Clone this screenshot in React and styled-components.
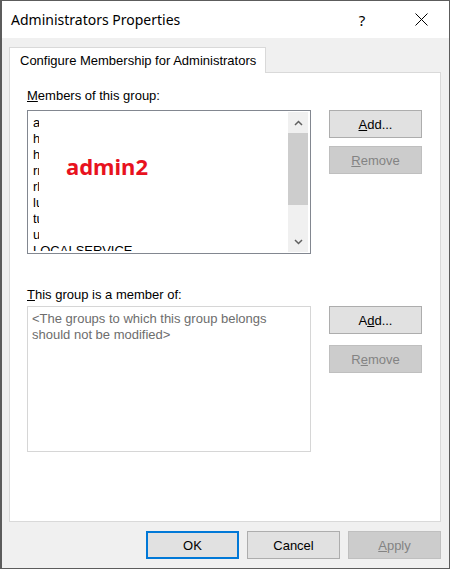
import React from 'react';
import styled, { createGlobalStyle, css } from 'styled-components';

const GlobalStyle = createGlobalStyle`
  html, body {
    margin: 0;
    padding: 0;
    background: #ffffff;
  }
  * {
    box-sizing: border-box;
  }
`;

const uiFont = css`
  font-family: 'Liberation Sans', Arial, sans-serif;
  font-size: 13px;
`;

const Window = styled.div`
  width: 450px;
  height: 569px;
  border: 1px solid #5c5c5c;
  border-left-width: 2px;
  background: #f0f0f0;
  display: flex;
  flex-direction: column;
  ${uiFont}
`;

const TitleBar = styled.div`
  height: 37px;
  background: #ffffff;
  display: flex;
  align-items: center;
  padding-left: 9px;
`;

const Title = styled.div`
  font-family: 'Noto Sans', 'Open Sans', sans-serif;
  font-size: 14px;
  color: #000;
  flex: 1;
`;

const TitleButton = styled.div`
  width: 20px;
  height: 37px;
  display: flex;
  align-items: center;
  justify-content: center;
  font-family: 'Noto Sans', sans-serif;
  font-size: 15px;
  color: #000;
  margin-right: ${(p) => p.$mr || 0}px;
`;

const Body = styled.div`
  flex: 1;
  display: flex;
  flex-direction: column;
  padding: 9px 8px 0 7px;
`;

const TabStrip = styled.div`
  display: flex;
  height: 25px;
`;

const Tab = styled.div`
  height: 26px;
  padding: 0 9px 0 10px;
  background: #ffffff;
  border: 1px solid #d9d9d9;
  border-bottom: none;
  display: flex;
  align-items: center;
  position: relative;
  z-index: 1;
  color: #000;
`;

const Panel = styled.div`
  height: 450px;
  border: 1px solid #d9d9d9;
  background: #ffffff;
  padding: 15px 17px 0 17px;
  display: flex;
  flex-direction: column;
`;

const Label = styled.div`
  line-height: 15px;
  color: #000;
  margin-top: ${(p) => p.$mt || 0}px;
  margin-bottom: ${(p) => p.$mb || 0}px;
`;

const Row = styled.div`
  display: grid;
  grid-template-columns: 284px 93px;
  column-gap: 18px;
  align-items: start;
`;

const ButtonColumn = styled.div`
  display: flex;
  flex-direction: column;
  gap: ${(p) => p.$gap}px;
`;

const ListBox = styled.div`
  position: relative;
  height: ${(p) => p.$h}px;
  border: 1px solid ${(p) => (p.$disabled ? '#d6d6d6' : '#828790')};
  background: #ffffff;
  display: flex;
  padding: 1px 2px 1px 0;
`;

const ListItems = styled.div`
  flex: 1;
  overflow: hidden;
  padding: 3px 0 0 5px;
  margin-bottom: 1px;
`;

const Item = styled.div`
  height: 16px;
  line-height: 16px;
  color: #000;
  width: ${(p) => (p.$clip ? '5.5px' : 'auto')};
  overflow: hidden;
  white-space: nowrap;
`;

const MutedText = styled.div`
  padding: 3px 0 0 4px;
  line-height: 16px;
  color: #6d6d6d;
`;

const ScrollBar = styled.div`
  width: 20px;
  background: #f0f0f0;
  display: flex;
  flex-direction: column;
`;

const ScrollArrow = styled.div`
  height: 21px;
  display: flex;
  align-items: center;
  justify-content: center;
`;

const ScrollTrack = styled.div`
  flex: 1;
  display: flex;
  flex-direction: column;
`;

const ScrollThumb = styled.div`
  height: 72px;
  background: #cdcdcd;
`;

const Annotation = styled.div`
  position: absolute;
  left: 38px;
  top: 44px;
  font-family: 'Noto Sans', 'Open Sans', sans-serif;
  font-weight: 700;
  font-size: 22px;
  line-height: 22px;
  color: #e8121e;
`;

const Button = styled.div`
  width: 93px;
  height: 28px;
  display: flex;
  align-items: center;
  justify-content: center;
  background: ${(p) => (p.$disabled ? '#cccccc' : '#e1e1e1')};
  border: 1px solid ${(p) => (p.$disabled ? '#bfbfbf' : p.$default ? '#0078d7' : '#adadad')};
  box-shadow: ${(p) => (p.$default ? 'inset 0 0 0 1px #0078d7' : 'none')};
  color: ${(p) => (p.$disabled ? '#838383' : '#000')};
`;

const Footer = styled.div`
  display: flex;
  justify-content: flex-end;
  gap: 8px;
  margin-top: 9px;
`;

const Chevron = ({ up }) => (
  <svg width="9" height="6" viewBox="0 0 9 6">
    <path
      d={up ? 'M1 5 L4.5 1.5 L8 5' : 'M1 1 L4.5 4.5 L8 1'}
      fill="none"
      stroke="#606060"
      strokeWidth="1.5"
    />
  </svg>
);

const CloseIcon = () => (
  <svg width="13" height="13" viewBox="0 0 13 13">
    <path d="M0.5 0.5 L12.5 12.5 M12.5 0.5 L0.5 12.5" stroke="#000" strokeWidth="1" />
  </svg>
);

const members = [
  'administrator',
  'hadoop',
  'helpdesk',
  'rmanager',
  'rlocal',
  'luser',
  'tuser',
  'user1',
];

const App = () => {
  return (
    <>
      <GlobalStyle />
      <Window>
        <TitleBar>
          <Title>Administrators Properties</Title>
          <TitleButton $mr={39}>?</TitleButton>
          <TitleButton $mr={18}>
            <CloseIcon />
          </TitleButton>
        </TitleBar>
        <Body>
          <TabStrip>
            <Tab>Configure Membership for Administrators</Tab>
          </TabStrip>
          <Panel>
            <Label $mb={7}>
              <u>M</u>embers of this group:
            </Label>
            <Row>
              <ListBox $h={144}>
                <ListItems>
                  {members.map((name) => (
                    <Item key={name} $clip>
                      {name}
                    </Item>
                  ))}
                  <Item>LOCALSERVICE</Item>
                </ListItems>
                <ScrollBar>
                  <ScrollArrow>
                    <Chevron up />
                  </ScrollArrow>
                  <ScrollTrack>
                    <ScrollThumb />
                  </ScrollTrack>
                  <ScrollArrow>
                    <Chevron />
                  </ScrollArrow>
                </ScrollBar>
                <Annotation>admin2</Annotation>
              </ListBox>
              <ButtonColumn $gap={8}>
                <Button>
                  <u>A</u>dd...
                </Button>
                <Button $disabled>
                  <u>R</u>emove
                </Button>
              </ButtonColumn>
            </Row>
            <Label $mt={33} $mb={4}>
              <u>T</u>his group is a member of:
            </Label>
            <Row>
              <ListBox $h={146} $disabled>
                <MutedText>
                  &lt;The groups to which this group belongs
                  <br />
                  should not be modified&gt;
                </MutedText>
              </ListBox>
              <ButtonColumn $gap={11}>
                <Button>
                  A<u>d</u>d...
                </Button>
                <Button $disabled>
                  R<u>e</u>move
                </Button>
              </ButtonColumn>
            </Row>
          </Panel>
          <Footer>
            <Button $default>OK</Button>
            <Button>Cancel</Button>
            <Button $disabled>
              <u>A</u>pply
            </Button>
          </Footer>
        </Body>
      </Window>
    </>
  );
};

export default App;
